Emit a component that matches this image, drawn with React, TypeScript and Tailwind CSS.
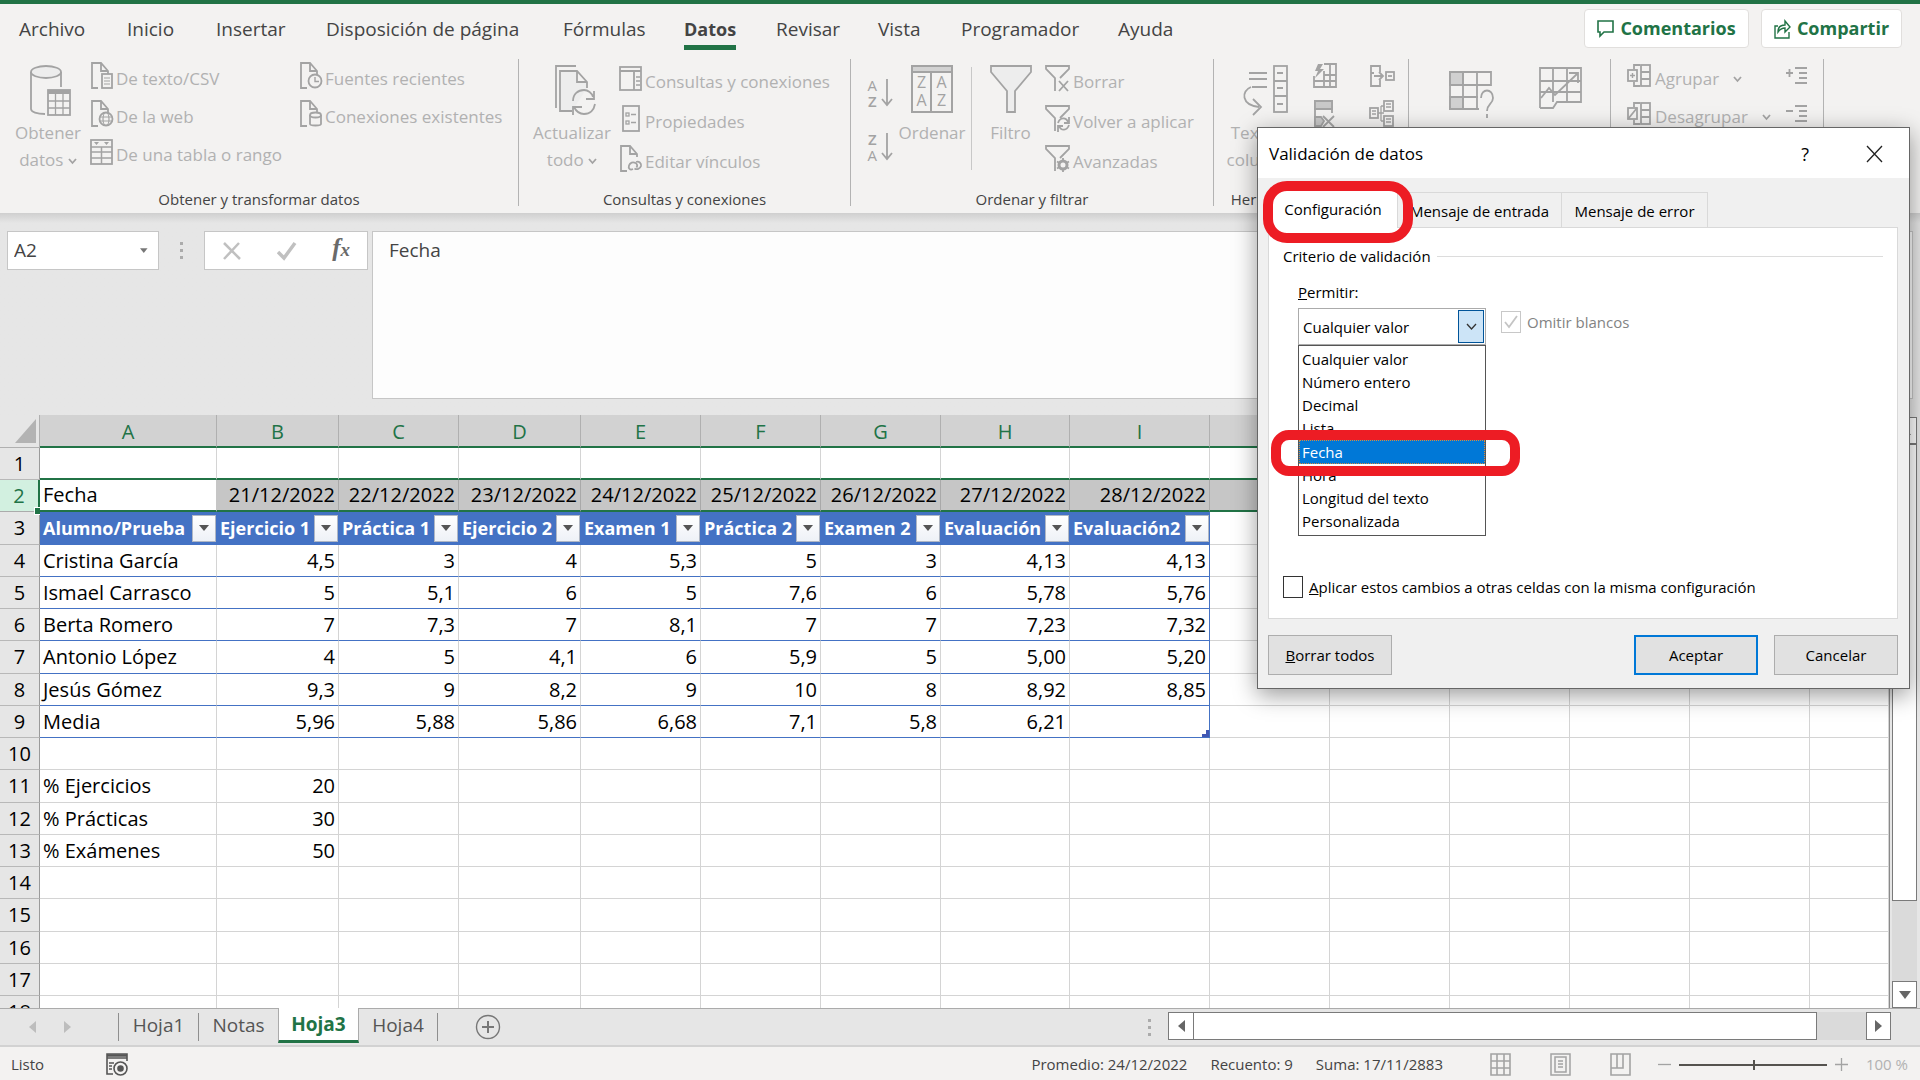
import type { ReactNode } from "react";

const menuTabs = [
  { name: "Archivo", width: "w-[108px]" },
  { name: "Inicio", width: "w-[89px]" },
  { name: "Insertar", width: "w-[110px]" },
  { name: "Disposición de página", width: "w-[237px]" },
  { name: "Fórmulas", width: "w-[121px]" },
  { name: "Datos", width: "w-[92px]" },
  { name: "Revisar", width: "w-[102px]" },
  { name: "Vista", width: "w-[83px]" },
  { name: "Programador", width: "w-[157px]" },
  { name: "Ayuda", width: "w-[80px]" },
];

const columns = [
  { name: "A", width: "w-[177px]" },
  { name: "B", width: "w-[122px]" },
  { name: "C", width: "w-[120px]" },
  { name: "D", width: "w-[122px]" },
  { name: "E", width: "w-[120px]" },
  { name: "F", width: "w-[120px]" },
  { name: "G", width: "w-[120px]" },
  { name: "H", width: "w-[129px]" },
  { name: "I", width: "w-[140px]" },
  { name: "J", width: "w-[120px]" },
  { name: "K", width: "w-[120px]" },
  { name: "L", width: "w-[120px]" },
  { name: "M", width: "w-[120px]" },
  { name: "N", width: "w-[120px]" },
  { name: "O", width: "" },
];

const rows: string[][] = [
  [],
  ["Fecha", "21/12/2022", "22/12/2022", "23/12/2022", "24/12/2022", "25/12/2022", "26/12/2022", "27/12/2022", "28/12/2022"],
  ["Alumno/Prueba", "Ejercicio 1", "Práctica 1", "Ejercicio 2", "Examen 1", "Práctica 2", "Examen 2", "Evaluación", "Evaluación2"],
  ["Cristina García", "4,5", "3", "4", "5,3", "5", "3", "4,13", "4,13"],
  ["Ismael Carrasco", "5", "5,1", "6", "5", "7,6", "6", "5,78", "5,76"],
  ["Berta Romero", "7", "7,3", "7", "8,1", "7", "7", "7,23", "7,32"],
  ["Antonio López", "4", "5", "4,1", "6", "5,9", "5", "5,00", "5,20"],
  ["Jesús Gómez", "9,3", "9", "8,2", "9", "10", "8", "8,92", "8,85"],
  ["Media", "5,96", "5,88", "5,86", "6,68", "7,1", "5,8", "6,21", ""],
  [],
  ["% Ejercicios", "20"],
  ["% Prácticas", "30"],
  ["% Exámenes", "50"],
  [],
  [],
  [],
  [],
  [],
];

const criteria = [
  "Cualquier valor",
  "Número entero",
  "Decimal",
  "Lista",
  "Fecha",
  "Hora",
  "Longitud del texto",
  "Personalizada",
];

function Icon({ w, h, children }: { w: number; h: number; children: ReactNode }) {
  return (
    <svg
      width={w}
      height={h}
      viewBox={`0 0 ${w} ${h}`}
      fill="none"
      stroke="#a3a3a3"
      strokeWidth="1.8"
      className="shrink-0"
      aria-hidden="true"
    >
      {children}
    </svg>
  );
}

function Chevron() {
  return (
    <svg width="9" height="7" viewBox="0 0 9 7" fill="none" stroke="#a3a3a3" strokeWidth="1.8" aria-hidden="true">
      <path d="M1 1l3.5 4L8 1" />
    </svg>
  );
}

/* ---- ribbon icons ---- */

function DatabaseIcon() {
  return (
    <Icon w={42} h={52}>
      <path d="M1 7v37c0 3 6 5 14 5M31 7v15" />
      <ellipse cx="16" cy="7" rx="15" ry="6" fill="#ededed" />
      <rect x="18" y="25" width="22" height="25" fill="#f3f2f1" />
      <path d="M18 27h22" strokeWidth="4" />
      <path d="M18 36h22M18 43h22M25.500 29v21M33 29v21" strokeWidth="1.300" />
    </Icon>
  );
}

function PageIcon({ children }: { children?: ReactNode }) {
  return (
    <Icon w={24} h={28}>
      <path d="M8 26H2V1h9l7 8v3M11 1v8h7" />
      {children}
    </Icon>
  );
}

function CsvIcon() {
  return (
    <PageIcon>
      <rect x="12" y="12" width="10" height="14" fill="#f3f2f1" />
      <path d="M14 16h6M14 19h6M14 22h6" strokeWidth="1.200" />
    </PageIcon>
  );
}

function WebIcon() {
  return (
    <PageIcon>
      <circle cx="16" cy="19" r="6.500" fill="#f3f2f1" />
      <ellipse cx="16" cy="19" rx="3" ry="6.500" strokeWidth="1.200" />
      <path d="M10 17h12M10 21h12" strokeWidth="1.200" />
    </PageIcon>
  );
}

function RecentIcon() {
  return (
    <PageIcon>
      <circle cx="16" cy="19" r="6.500" fill="#f3f2f1" />
      <path d="M16 15v4.500h4" strokeWidth="1.400" />
    </PageIcon>
  );
}

function ConnectionIcon() {
  return (
    <PageIcon>
      <path d="M11 15v9c0 2 11 2 11 0v-9" fill="#f3f2f1" />
      <ellipse cx="16.500" cy="15" rx="5.500" ry="2.500" fill="#f3f2f1" />
    </PageIcon>
  );
}

function LinkPageIcon() {
  return (
    <PageIcon>
      <path d="M14 24c-3 1.500-5-.5-4-3.500 1-3 4-4 6.500-2.500 2 1 2 3 1 4.500" />
      <path d="M17 17c3-1 5.500 1 5 4-1 3-4 4-6.500 2.500" />
    </PageIcon>
  );
}

function TableRangeIcon() {
  return (
    <Icon w={24} h={28}>
      <rect x="1" y="2" width="21" height="24" />
      <path d="M1 9h21M1 14h21M1 20h21M11.500 9v17" strokeWidth="1.500" />
      <path d="M4 4h5l-2.500 3zM14 4h5l-2.500 3z" fill="#a3a3a3" stroke="none" />
    </Icon>
  );
}

function RefreshIcon() {
  return (
    <Icon w={42} h={52}>
      <path d="M2 43V1h20" />
      <path d="M18 46H6V6h17l10 11v6M23 6v11h10" fill="#ededed" />
      <path d="M19 36c0-7 5-11 11-11 4 0 8 3 9 7M40 26v8h-8" />
      <path d="M41 39c-1 6-5 10-11 10-5 0-8-3-10-7M19 50v-8h9" />
    </Icon>
  );
}

function PaneIcon() {
  return (
    <Icon w={24} h={26}>
      <rect x="1" y="1" width="21" height="23" />
      <path d="M1 5h21M15 5v19" />
      <path d="M17 11h4M17 15h4M17 19h4" strokeWidth="1.300" />
    </Icon>
  );
}

function PropertiesIcon() {
  return (
    <Icon w={24} h={28}>
      <rect x="4" y="1" width="16" height="25" />
      <rect x="7" y="8" width="3" height="3" strokeWidth="1.300" />
      <rect x="7" y="16" width="3" height="3" strokeWidth="1.300" />
      <path d="M12 9.500h5M12 17.500h5" strokeWidth="1.300" />
    </Icon>
  );
}

function SortArrowIcon({ first, second }: { first: string; second: string }) {
  return (
    <span className="flex items-center gap-1">
      <span className="flex flex-col text-[15px] leading-4 text-[#a3a3a3]">
        <span className={first === "Z" ? "font-semibold" : ""}>{first}</span>
        <span className={second === "Z" ? "font-semibold" : ""}>{second}</span>
      </span>
      <Icon w={12} h={30}>
        <path d="M6 1v26M1 21l5 6 5-6" />
      </Icon>
    </span>
  );
}

function SortIcon() {
  return (
    <span className="flex h-[48px] w-[42px] flex-col border-2 border-[#a3a3a3] text-[#a3a3a3]">
      <span className="h-[6px] border-b-2 border-[#a3a3a3] bg-[#d2d2d2]" />
      <span className="grid flex-1 grid-cols-2 divide-x-2 divide-[#a3a3a3] text-center text-base leading-[18px]">
        <span>
          Z<br />A
        </span>
        <span>
          A<br />Z
        </span>
      </span>
    </span>
  );
}

function FilterIcon() {
  return (
    <Icon w={42} h={48}>
      <path d="M1 1h40v6L25 26v21h-8V26L1 7z" fill="#ededed" />
    </Icon>
  );
}

function SmallFilter({ children }: { children: ReactNode }) {
  return (
    <Icon w={26} h={28}>
      <path d="M10 26V13L1 4V1h23v3l-9 9" />
      {children}
    </Icon>
  );
}

function TextColumnsIcon() {
  return (
    <Icon w={46} h={52}>
      <path d="M7 8h18M7 14h18M10 22h15" />
      <path d="M9 22c-10 4-10 18 8 20M11 34l8 8-8 8" />
      <rect x="32" y="1" width="13" height="46" />
      <path d="M32 16h13M32 31h13M35 8h6M35 23h6M35 39h6" />
    </Icon>
  );
}

function FlashFillIcon() {
  return (
    <Icon w={26} h={26}>
      <path d="M12 1h12v23H2V13M2 18h22M12 12h12M12 8v16M18 1v23" />
      <path d="M6 1h5L8 6h4L3 15l3-7H3z" fill="#a3a3a3" stroke="none" />
    </Icon>
  );
}

function RemoveDuplicatesIcon() {
  return (
    <Icon w={26} h={28}>
      <path d="M3 26V1h17v12M3 9h17" />
      <path d="M3 1h17v8H3zM3 17h6l3 4-3 5H3z" fill="#c8c8c8" />
      <path d="M11 16l11 11M22 16L11 27" />
    </Icon>
  );
}

function ConsolidateIcon() {
  return (
    <Icon w={26} h={24}>
      <path d="M11 8V2H2v7h3M2 9v13h9v-6M5 12h9M10 8l4 4-4 4" />
      <rect x="17" y="8" width="8" height="8" />
      <path d="M19 12h4" />
    </Icon>
  );
}

function DataModelIcon() {
  return (
    <Icon w={26} h={28}>
      <rect x="1" y="8" width="8" height="10" />
      <rect x="15" y="1" width="9" height="10" />
      <rect x="15" y="16" width="9" height="10" />
      <path d="M9 13h6M12 6v15M12 6h3M12 21h3M3 11h4M3 14h4M17 4h5M17 7h5M17 19h5M17 22h5" strokeWidth="1.300" />
    </Icon>
  );
}

function WhatIfIcon() {
  return (
    <Icon w={46} h={48}>
      <path d="M1 1h13v13H1zM1 26h13v12H1z" fill="#d0d0d0" />
      <path d="M42 15V1H1v37h29M1 14h41M1 26h28M14 1v37M28 1v37" />
      <path d="M32 27c0-10 12-10 12 0 0 6-6 6-6 13M38 43v4" />
    </Icon>
  );
}

function ForecastIcon() {
  return (
    <Icon w={44} h={44}>
      <path d="M1 41V1h41v34H18l-4 6H1M1 14h41M1 25h41M14 1v34M28 1v34" />
      <path d="M2 31l8-10 6 7L38 7M30 6h9v10" />
    </Icon>
  );
}

function GroupIcon({ ungroup }: { ungroup?: boolean }) {
  return (
    <Icon w={26} h={24}>
      <path d="M13 1H7v4M13 22H7v-4" />
      <rect x="1" y="6" width="9" height="11" />
      {ungroup ? <path d="M1 17L10 6" /> : <path d="M3 11.500h5M5.500 9v5" strokeWidth="1.400" />}
      <rect x="14" y="1" width="9" height="21" />
      <path d="M14 8h9M14 15h9" />
    </Icon>
  );
}

function DetailIcon({ minus }: { minus?: boolean }) {
  return (
    <Icon w={22} h={20}>
      <path d="M10 2h12M14 7h8M14 12h8M10 17h12M1 7h7" />
      {!minus && <path d="M4.500 3v8" />}
    </Icon>
  );
}

/* ---- ribbon ---- */

function RibbonGroup({ width, label, children }: { width: string; label: string; children: ReactNode }) {
  return (
    <section className={`flex shrink-0 flex-col border-r border-[#b3b3b3] ${width}`}>
      <div className="flex flex-1">{children}</div>
      <h2 className="whitespace-nowrap text-center text-[15px] leading-[14px] text-[#444]">{label}</h2>
    </section>
  );
}

function BigButton({ icon, width, children }: { icon: ReactNode; width: string; children: ReactNode }) {
  return (
    <button className={`flex shrink-0 flex-col items-center self-start pt-1.5 text-[17px] leading-[27px] text-[#b1b1b1] ${width}`}>
      <span className="flex h-[54px] items-start">{icon}</span>
      <span>{children}</span>
    </button>
  );
}

function SmallButton({ icon, children }: { icon: ReactNode; children?: ReactNode }) {
  return (
    <button className="flex h-7 items-center gap-0.5 whitespace-nowrap text-[17px] leading-[22px] text-[#b1b1b1]">
      {icon}
      {children && <span className="flex items-center pt-1.5">{children}</span>}
    </button>
  );
}

function Ribbon() {
  return (
    <div className="flex h-[154px] bg-[#f3f2f1] pb-[7px]">
      <RibbonGroup width="w-[519px]" label="Obtener y transformar datos">
        <BigButton icon={<span className="pl-1.5"><DatabaseIcon /></span>} width="w-[90px] pl-1.5">
          Obtener
          <br />
          datos <span className="inline-block align-middle"><Chevron /></span>
        </BigButton>
        <div className="flex w-[209px] flex-col gap-[10px] pt-[3px]">
          <SmallButton icon={<CsvIcon />}>De texto/CSV</SmallButton>
          <SmallButton icon={<WebIcon />}>De la web</SmallButton>
          <SmallButton icon={<TableRangeIcon />}>De una tabla o rango</SmallButton>
        </div>
        <div className="flex flex-col gap-[10px] pt-[3px]">
          <SmallButton icon={<RecentIcon />}>Fuentes recientes</SmallButton>
          <SmallButton icon={<ConnectionIcon />}>Conexiones existentes</SmallButton>
        </div>
      </RibbonGroup>

      <RibbonGroup width="w-[332px]" label="Consultas y conexiones">
        <BigButton icon={<span className="pl-1.5"><RefreshIcon /></span>} width="w-[100px] pl-1.5">
          Actualizar
          <br />
          todo <span className="inline-block align-middle"><Chevron /></span>
        </BigButton>
        <div className="flex flex-col gap-3 pt-[6px]">
          <SmallButton icon={<PaneIcon />}>Consultas y conexiones</SmallButton>
          <SmallButton icon={<PropertiesIcon />}>Propiedades</SmallButton>
          <SmallButton icon={<LinkPageIcon />}>Editar vínculos</SmallButton>
        </div>
      </RibbonGroup>

      <RibbonGroup width="w-[363px]" label="Ordenar y filtrar">
        <div className="flex w-[42px] flex-col items-end gap-[22px] pt-[18px]">
          <button aria-label="Ordenar de A a Z">
            <SortArrowIcon first="A" second="Z" />
          </button>
          <button aria-label="Ordenar de Z a A">
            <SortArrowIcon first="Z" second="A" />
          </button>
        </div>
        <BigButton icon={<SortIcon />} width="w-[78px]">Ordenar</BigButton>
        <div className="mt-2 h-[103px] w-px bg-[#c8c8c8]" />
        <BigButton icon={<FilterIcon />} width="w-[73px] pl-1">Filtro</BigButton>
        <div className="flex flex-col gap-3 pt-[6px]">
          <SmallButton icon={<SmallFilter><path d="M14 16l9 10M23 16l-9 10" /></SmallFilter>}>Borrar</SmallButton>
          <SmallButton
            icon={
              <SmallFilter>
                <path d="M13 18c2-6 8-6 10-1M24 12v6h-5M24 20c-2 6-8 6-10 1M13 27v-6h5" />
              </SmallFilter>
            }
          >
            Volver a aplicar
          </SmallButton>
          <SmallButton
            icon={
              <SmallFilter>
                <circle cx="18" cy="20" r="4" strokeWidth="3" />
                <path d="M18 13v3M18 24v3M12 16.500l2.500 1.500M21.500 22l2.500 1.500M12 23.500l2.500-1.500M21.500 18l2.500-1.500" />
              </SmallFilter>
            }
          >
            Avanzadas
          </SmallButton>
        </div>
      </RibbonGroup>

      <RibbonGroup width="w-[195px]" label="Herramientas de datos">
        <BigButton icon={<TextColumnsIcon />} width="w-[98px] pl-1">
          Texto en
          <br />
          columnas
        </BigButton>
        <div className="flex w-[57px] flex-col gap-[10px] pt-[3px]">
          <SmallButton icon={<FlashFillIcon />} />
          <SmallButton icon={<RemoveDuplicatesIcon />} />
        </div>
        <div className="flex flex-col gap-[10px] pt-[3px]">
          <SmallButton icon={<ConsolidateIcon />} />
          <SmallButton icon={<DataModelIcon />} />
        </div>
      </RibbonGroup>

      <RibbonGroup width="w-[202px]" label="Previsión">
        <BigButton icon={<span className="pt-1.5"><WhatIfIcon /></span>} width="w-[126px] whitespace-nowrap">
          Análisis de
        </BigButton>
        <BigButton icon={<span className="pt-0.5"><ForecastIcon /></span>} width="w-[76px] pr-6">
          Previsión
        </BigButton>
      </RibbonGroup>

      <RibbonGroup width="w-[213px]" label="Esquema">
        <div className="flex w-[174px] flex-col gap-[10px] pl-4 pt-[3px]">
          <SmallButton icon={<GroupIcon />}>
            Agrupar <span className="pl-3.5"><Chevron /></span>
          </SmallButton>
          <SmallButton icon={<GroupIcon ungroup />}>
            Desagrupar <span className="pl-3.5"><Chevron /></span>
          </SmallButton>
        </div>
        <div className="flex flex-col gap-[10px] pt-[3px]">
          <SmallButton icon={<DetailIcon />} />
          <SmallButton icon={<DetailIcon minus />} />
        </div>
      </RibbonGroup>
    </div>
  );
}

function MenuBar() {
  return (
    <header className="flex h-[59px] items-start border-t-4 border-[#217346] bg-[#f3f2f1] pl-[19px] pr-[18px]">
      <nav className="flex pt-2">
        {menuTabs.map((tab) => (
          <div key={tab.name} className={`shrink-0 ${tab.width}`}>
            <button
              className={
                tab.name === "Datos"
                  ? "h-[38px] whitespace-nowrap border-b-[5px] border-[#217346] text-[18px] font-bold leading-8 text-[#444]"
                  : "h-[38px] whitespace-nowrap border-b-[5px] border-transparent text-[19px] leading-8 text-[#444]"
              }
            >
              {tab.name}
            </button>
          </div>
        ))}
      </nav>
      <div className="ml-auto flex gap-3 pt-[5px]">
        <button className="flex h-[39px] w-[165px] items-center justify-center gap-1.5 rounded border border-[#e1dfdd] bg-white text-[18px] font-bold text-[#217346]">
          <svg width="17" height="19" viewBox="0 0 17 19" fill="none" stroke="#217346" strokeWidth="1.600" aria-hidden="true">
            <path d="M1 2h15v11H7l-4 4v-4H1z" />
          </svg>
          Comentarios
        </button>
        <button className="flex h-[39px] w-[141px] items-center justify-center gap-1.5 rounded border border-[#e1dfdd] bg-white text-[18px] font-bold text-[#217346]">
          <svg width="17" height="21" viewBox="0 0 17 21" fill="none" stroke="#217346" strokeWidth="1.400" aria-hidden="true">
            <path d="M4 8H1v12h14v-6" />
            <path d="M4 14c0-5 3-7 7-7V3l5 6-5 5v-4c-3 0-5 1-7 4z" />
          </svg>
          Compartir
        </button>
      </div>
    </header>
  );
}

function FormulaBar() {
  return (
    <div className="flex bg-linear-to-b from-[#cfcfcf] from-0% to-[#e6e6e6] to-[10px] px-[7px] pb-4 pt-[18px] text-[19px] text-[#444]">
      <label className="flex h-[39px] w-[152px] items-center border border-[#c6c6c6] bg-white pr-2.5">
        <input className="w-full min-w-0 bg-transparent pl-1.5 outline-none" defaultValue="A2" aria-label="Cuadro de nombres" />
        <svg width="8" height="6" viewBox="0 0 8 6" aria-hidden="true">
          <path d="M0 0h8L4 5z" fill="#777" />
        </svg>
      </label>
      <div className="flex h-[39px] w-[45px] flex-col items-center justify-center gap-1">
        <span className="h-[3px] w-[3px] bg-[#ababab]" />
        <span className="h-[3px] w-[3px] bg-[#ababab]" />
        <span className="h-[3px] w-[3px] bg-[#ababab]" />
      </div>
      <div className="mr-1 flex h-[39px] w-[164px] items-center justify-between border border-[#c6c6c6] bg-white pl-[17px] pr-[17px]">
        <button aria-label="Cancelar edición">
          <svg width="20" height="20" viewBox="0 0 20 20" stroke="#c0c0c0" strokeWidth="2.500" aria-hidden="true">
            <path d="M2 2l16 16M17 2L2 18" />
          </svg>
        </button>
        <button aria-label="Introducir">
          <svg width="20" height="20" viewBox="0 0 20 20" fill="none" stroke="#c0c0c0" strokeWidth="3.500" aria-hidden="true">
            <path d="M1 11l6 6L18 2" />
          </svg>
        </button>
        <button
          aria-label="Insertar función"
          className="pb-1 font-['Liberation_Serif',serif] text-[25px] font-bold italic leading-8 text-[#6a6a6a]"
        >
          f<span className="text-[19px]">x</span>
        </button>
      </div>
      <textarea
        className="h-[168px] flex-1 resize-none border border-[#c6c6c6] bg-[#fdfdfd] px-4 py-1 leading-7 outline-none"
        defaultValue="Fecha"
        aria-label="Barra de fórmulas"
      />
    </div>
  );
}

/* ---- sheet ---- */

function cellClass(row: number, col: number) {
  const inTable = row >= 3 && row <= 9 && col <= 8;
  if (row === 1) return "border-r border-b-2 border-r-[#d4d4d4] border-b-[#217346] bg-white";
  if (row === 2) {
    return col === 0
      ? "border-r border-b-2 border-r-[#c6c6c6] border-b-[#217346] bg-white"
      : "border-r border-b-2 border-r-[#a9a9a9] border-b-[#217346] bg-[#c6c6c6]";
  }
  if (inTable && row === 3) return "border-r border-b border-[#4472c4] bg-[#4472c4]";
  if (inTable && col === 8) return "border-r border-b border-[#4472c4] bg-white";
  if (inTable) return "border-r border-b border-r-[#d4d4d4] border-b-[#4472c4] bg-white";
  return "border-r border-b border-[#d4d4d4] bg-white";
}

function HeaderCell({ text }: { text: string }) {
  return (
    <div className="flex items-center justify-between pl-[3px] text-[18px] font-bold text-white">
      <span>{text}</span>
      <button
        aria-label={`Filtrar ${text}`}
        className="flex h-[27px] w-6 shrink-0 items-center justify-center border border-[#b0b7c4] bg-linear-to-b from-white to-[#eef1f7]"
      >
        <svg width="10" height="7" viewBox="0 0 10 7" aria-hidden="true">
          <path d="M0 0h10L5 6z" fill="#555" />
        </svg>
      </button>
    </div>
  );
}

function Sheet() {
  return (
    <table className="w-full table-fixed border-separate border-spacing-0 text-[20px] leading-7 text-black">
      <thead>
        <tr className="h-[33px]">
          <th className="w-10 border-b border-r border-[#b0b0b0] bg-[#e6e6e6]">
            <svg width="21" height="24" viewBox="0 0 21 24" className="ml-[15px]" aria-hidden="true">
              <path d="M21 0v24H0z" fill="#b3b3b3" />
            </svg>
          </th>
          {columns.map((c) => (
            <th
              key={c.name}
              className={`border-b-2 border-r border-b-[#217346] border-r-[#b0b0b0] bg-[#d2d2d2] pt-[3px] font-normal text-[#217346] ${c.width}`}
            >
              {c.name}
            </th>
          ))}
        </tr>
      </thead>
      <tbody>
        {rows.map((cells, i) => {
          const row = i + 1;
          return (
            <tr key={row} className={row % 4 === 3 ? "h-[33px]" : "h-8"}>
              <th
                className={
                  row === 2
                    ? "relative border-b border-r-2 border-b-[#ababab] border-r-[#217346] bg-[#d2f0e0] font-normal text-[#217346]"
                    : "border-b border-r border-b-[#b8b8b8] border-r-[#9b9b9b] bg-[#e6e6e6] font-normal"
                }
              >
                {row}
                {row === 2 && <span className="absolute -bottom-1 -right-1 h-2 w-2 border border-white bg-[#217346]" />}
              </th>
              {columns.map((c, col) => (
                <td key={c.name} className={`relative whitespace-nowrap ${cellClass(row, col)}`}>
                  {row === 3 && cells[col] ? (
                    <HeaderCell text={cells[col]} />
                  ) : (
                    <div className={col === 0 ? "h-7 pl-[3px]" : "h-7 pr-[3px] text-right"}>{cells[col]}</div>
                  )}
                  {row === 9 && col === 8 && (
                    <svg width="7" height="7" viewBox="0 0 7 7" className="absolute bottom-0 right-0" aria-hidden="true">
                      <path d="M7 0v7H0V4h4V0z" fill="#4258b4" />
                    </svg>
                  )}
                </td>
              ))}
            </tr>
          );
        })}
      </tbody>
    </table>
  );
}

function VerticalScrollbar() {
  return (
    <div className="flex w-[31px] shrink-0 flex-col border-l border-[#8a8a8a] bg-[#e6e6e6] pl-0.5 pr-[3px] pt-0.5">
      <button aria-label="Desplazar hacia arriba" className="flex h-[27px] items-center justify-center border border-[#7a7a7a] bg-white">
        <svg width="12" height="8" viewBox="0 0 12 8" aria-hidden="true">
          <path d="M0 8h12L6 0z" fill="#666" />
        </svg>
      </button>
      <div className="flex flex-1 flex-col bg-[#dadada]">
        <div className="h-[457px] border border-[#7a7a7a] bg-white" />
      </div>
      <button aria-label="Desplazar hacia abajo" className="flex h-[27px] items-center justify-center border border-[#7a7a7a] bg-white">
        <svg width="12" height="8" viewBox="0 0 12 8" aria-hidden="true">
          <path d="M0 0h12L6 8z" fill="#666" />
        </svg>
      </button>
    </div>
  );
}

function SheetTabs() {
  return (
    <div className="flex h-[37px] border-t border-[#ababab] bg-[#e6e6e6] text-[19px] text-[#555]">
      <div className="flex w-[118px] items-center gap-7 pl-[29px]">
        <button aria-label="Hoja anterior">
          <svg width="7" height="12" viewBox="0 0 7 12" aria-hidden="true">
            <path d="M7 0v12L0 6z" fill="#bdbdbd" />
          </svg>
        </button>
        <button aria-label="Hoja siguiente">
          <svg width="7" height="12" viewBox="0 0 7 12" aria-hidden="true">
            <path d="M0 0v12l7-6z" fill="#bdbdbd" />
          </svg>
        </button>
      </div>
      <button className="my-1 w-20 border-l border-[#8f8f8f] pb-1 leading-6">Hoja1</button>
      <button className="my-1 w-20 border-l border-[#8f8f8f] pb-1 leading-6">Notas</button>
      <button className="-mt-px h-[35px] w-[81px] border-x border-b-[3px] border-x-[#ababab] border-b-[#217346] bg-white font-bold leading-6 text-[#217346]">
        Hoja3
      </button>
      <button className="my-1 w-[79px] border-r border-[#8f8f8f] pb-1 leading-6">Hoja4</button>
      <button aria-label="Hoja nueva" className="ml-[37px]">
        <svg width="26" height="26" viewBox="0 0 26 26" fill="none" stroke="#777" strokeWidth="1.400" aria-hidden="true">
          <circle cx="13" cy="13" r="11.500" />
          <path d="M7 13h12M13 7v12" strokeWidth="2" />
        </svg>
      </button>
      <div className="ml-auto mr-[17px] flex flex-col justify-center gap-1">
        <span className="h-[3px] w-[3px] bg-[#ababab]" />
        <span className="h-[3px] w-[3px] bg-[#ababab]" />
        <span className="h-[3px] w-[3px] bg-[#ababab]" />
      </div>
      <div className="mr-[29px] mt-[3px] flex h-7 w-[723px] bg-[#dadada]">
        <button aria-label="Desplazar a la izquierda" className="flex w-[26px] items-center justify-center border border-[#7a7a7a] bg-white">
          <svg width="7" height="12" viewBox="0 0 7 12" aria-hidden="true">
            <path d="M7 0v12L0 6z" fill="#666" />
          </svg>
        </button>
        <div className="w-[623px] border border-l-0 border-[#7a7a7a] bg-white" />
        <button aria-label="Desplazar a la derecha" className="ml-auto flex w-[25px] items-center justify-center border border-[#7a7a7a] bg-white">
          <svg width="7" height="12" viewBox="0 0 7 12" aria-hidden="true">
            <path d="M0 0v12l7-6z" fill="#666" />
          </svg>
        </button>
      </div>
    </div>
  );
}

function StatusBar() {
  return (
    <footer className="flex h-[35px] items-center border-t-2 border-[#d2d2d2] bg-[#f3f2f1] pl-[11px] pr-3 pt-0.5 text-[15px] text-[#444]">
      <span className="w-[95px]">Listo</span>
      <svg width="23" height="24" viewBox="0 0 23 24" fill="none" stroke="#555" strokeWidth="1.600" aria-hidden="true">
        <path d="M7 21H1V1h20v7M1 5h20" />
        <path d="M1 2.500h20" strokeWidth="2.500" />
        <path d="M3 10h5M3 13h3M3 16h3" />
        <circle cx="14.500" cy="15.500" r="6.500" />
        <circle cx="14.500" cy="15.500" r="2.500" fill="#555" />
      </svg>
      <div className="ml-auto flex gap-[23px]">
        <span>Promedio: 24/12/2022</span>
        <span>Recuento: 9</span>
        <span>Suma: 17/11/2883</span>
      </div>
      <div className="ml-[47px] flex gap-[39px]">
        <button aria-label="Normal">
          <Icon w={21} h={23}>
            <path d="M1 1h19v21H1zM1 8h19M1 15h19M7 1v21M14 1v21" strokeWidth="1.600" />
          </Icon>
        </button>
        <button aria-label="Diseño de página">
          <Icon w={21} h={23}>
            <path d="M1 1h19v21H1zM5 4h11v15H5zM8 8h5M8 11h5M8 14h5" strokeWidth="1.500" />
          </Icon>
        </button>
        <button aria-label="Vista previa de salto de página">
          <Icon w={21} h={23}>
            <path d="M1 1h19v21H1zM7 1v14M1 15h12V1" strokeWidth="1.600" />
          </Icon>
        </button>
      </div>
      <div className="ml-[27px] flex items-center">
        <button aria-label="Alejar">
          <Icon w={13} h={13}>
            <path d="M0 6.500h13" strokeWidth="1.300" />
          </Icon>
        </button>
        <div className="relative ml-2 flex w-[148px] items-center">
          <span className="h-0.5 w-full bg-[#55534f]" />
          <span className="absolute left-1/2 h-[10px] w-0.5 bg-[#55534f]" />
          <input type="range" aria-label="Zoom" min={10} max={190} defaultValue={100} className="absolute inset-x-0 m-0 h-4 opacity-0" />
        </div>
        <button aria-label="Acercar" className="ml-2">
          <Icon w={13} h={13}>
            <path d="M0 6.500h13M6.500 0v13" strokeWidth="1.300" />
          </Icon>
        </button>
        <span className="ml-[18px] text-[#b1b1b1]">100 %</span>
      </div>
    </footer>
  );
}

/* ---- data validation dialog ---- */

function ValidationDialog() {
  return (
    <div
      role="dialog"
      aria-labelledby="dialog-title"
      className="absolute right-[10px] top-[127px] w-[653px] border border-[#666] bg-[#f0f0f0] text-[15px] leading-5 text-black shadow-[0_6px_22px_rgba(0,0,0,0.4)]"
    >
      <div className="flex h-[50px] items-center bg-white pl-[11px] pr-[26px] pt-0.5">
        <h2 id="dialog-title" className="text-[17px]">
          Validación de datos
        </h2>
        <button aria-label="Ayuda" className="ml-auto text-[18px]">
          ?
        </button>
        <button aria-label="Cerrar" className="ml-[57px]">
          <svg width="17" height="18" viewBox="0 0 17 18" stroke="#222" strokeWidth="1.300" aria-hidden="true">
            <path d="M1 1l15 16M16 1L1 17" />
          </svg>
        </button>
      </div>

      <div className="pb-[13px] pl-[10px] pr-[11px] pt-3">
        <div role="tablist" className="flex items-end">
          <button role="tab" aria-selected="true" className="relative -mb-px h-[38px] w-[130px] border border-b-0 border-[#d9d9d9] bg-white pb-0.5">
            Configuración
            <span className="absolute -left-[6px] -top-[10px] h-[62px] w-[150px] rounded-[24px] border-[10px] border-[#ed1c24]" />
          </button>
          <button role="tab" aria-selected="false" className="h-[35px] w-[164px] border border-b-0 border-l-0 border-[#d9d9d9] pt-0.5">
            Mensaje de entrada
          </button>
          <button role="tab" aria-selected="false" className="h-[35px] w-[146px] border border-b-0 border-l-0 border-[#d9d9d9] pt-0.5">
            Mensaje de error
          </button>
        </div>

        <div className="h-[392px] border border-[#d9d9d9] bg-white px-[14px] pt-[18px]">
          <div className="flex items-center gap-1.5">
            <span>Criterio de validación</span>
            <span className="h-px flex-1 bg-[#dcdcdc]" />
          </div>

          <div className="flex pl-[15px] pt-4">
            <div className="relative w-[188px]">
              <label htmlFor="allow" className="block">
                <span className="underline">P</span>ermitir:
              </label>
              <div className="relative mt-[6px]">
                <select
                  id="allow"
                  defaultValue="Cualquier valor"
                  className="h-[37px] w-full appearance-none border border-[#ababab] bg-white pl-1 outline-none"
                >
                  {criteria.map((c) => (
                    <option key={c}>{c}</option>
                  ))}
                </select>
                <span className="pointer-events-none absolute inset-y-0.5 right-0.5 flex w-[26px] items-center justify-center border border-[#005499] bg-[#cce4f7]">
                  <svg width="11" height="8" viewBox="0 0 11 8" fill="none" stroke="#333" strokeWidth="1.300" aria-hidden="true">
                    <path d="M1 1l4.500 5L10 1" />
                  </svg>
                </span>
              </div>
              <ul role="listbox" aria-label="Permitir" className="absolute inset-x-0 top-full border border-[#555] bg-white py-0.5">
                {criteria.map((c) => (
                  <li
                    key={c}
                    role="option"
                    aria-selected={c === "Fecha"}
                    className={
                      c === "Fecha"
                        ? "relative h-6 bg-[#0078d7] pl-[3px] leading-6 text-white outline-1 -outline-offset-1 outline-dotted outline-[#d98a3d]"
                        : "h-[23px] pl-[3px] leading-[23px]"
                    }
                  >
                    {c}
                    {c === "Fecha" && (
                      <span className="absolute -left-7 -top-[10px] z-10 h-[46px] w-[249px] rounded-[18px] border-[10px] border-[#ed1c24]" />
                    )}
                  </li>
                ))}
              </ul>
            </div>
            <label className="ml-[15px] mt-7 flex h-6 items-center gap-1.5 text-[#838383]">
              <span className="relative flex h-[22px] w-5">
                <input type="checkbox" defaultChecked disabled className="h-full w-full appearance-none border border-[#c8c8c8] bg-white" />
                <svg width="16" height="16" viewBox="0 0 16 16" fill="none" stroke="#c4c4c4" strokeWidth="1.800" className="absolute left-0.5 top-[3px]" aria-hidden="true">
                  <path d="M2 8l4 5 8-11" />
                </svg>
              </span>
              Omitir blancos
            </label>
          </div>

          <label className="mt-[231px] flex items-center gap-1.5">
            <input type="checkbox" className="h-[22px] w-5 appearance-none border border-[#333] bg-white" />
            <span>
              <span className="underline">A</span>plicar estos cambios a otras celdas con la misma configuración
            </span>
          </label>
        </div>

        <div className="flex gap-4 pt-4">
          <button className="mr-auto h-10 w-[124px] border border-[#adadad] bg-[#e1e1e1]">
            <span className="underline">B</span>orrar todos
          </button>
          <button className="h-10 w-[124px] border-2 border-[#0078d7] bg-[#e1e1e1]">Aceptar</button>
          <button className="h-10 w-[124px] border border-[#adadad] bg-[#e1e1e1]">Cancelar</button>
        </div>
      </div>
    </div>
  );
}

export default function App() {
  return (
    <main className="relative flex h-screen flex-col overflow-hidden bg-[#e6e6e6] font-['Open_Sans','Noto_Sans',sans-serif]">
      <MenuBar />
      <Ribbon />
      <FormulaBar />
      <div className="flex min-h-0 flex-1">
        <div className="min-w-0 flex-1 overflow-hidden">
          <Sheet />
        </div>
        <VerticalScrollbar />
      </div>
      <SheetTabs />
      <StatusBar />
      <ValidationDialog />
    </main>
  );
}
